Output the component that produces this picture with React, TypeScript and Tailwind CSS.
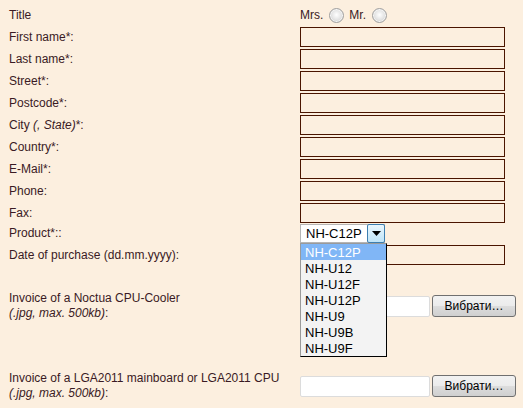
import React from "react";

const labels = [
  "First name*:",
  "Last name*:",
  "Street*:",
  "Postcode*:",
  "CITY",
  "Country*:",
  "E-Mail*:",
  "Phone:",
  "Fax:",
];

const items = ["NH-C12P", "NH-U12", "NH-U12F", "NH-U12P", "NH-U9", "NH-U9B", "NH-U9F"];

function Radio() {
  return (
    <span className="block w-[15px] h-[15px] rounded-full border border-[#a0a0a0] bg-[radial-gradient(circle_at_50%_45%,#ffffff_0%,#e4e4e4_50%,#bfbfbf_100%)] shadow-[inset_0_0_0_1px_#f6f6f6]" />
  );
}

function TextBox() {
  return <div className="w-[205px] h-[20px] border border-[#4a1500] box-border" />;
}

function FileInput() {
  return (
    <div className="flex items-center gap-[2px]">
      <div className="w-[130px] h-[21px] bg-white border border-[#dcdcdc] rounded-[2px]" />
      <div className="w-[84px] h-[22px] rounded-[3px] border border-[#707070] bg-[linear-gradient(#f2f2f2,#ebebeb_50%,#dddddd_50%,#cfcfcf)] flex items-center justify-center text-[12px] text-black">
        Вибрати…
      </div>
    </div>
  );
}

export default function App() {
  return (
    <div
      className="relative w-[523px] h-[408px] bg-[#fcefdf] text-[#3a1a24] text-[12px] leading-[15px] overflow-hidden"
      style={{ fontFamily: '"Liberation Sans", Arial, sans-serif' }}
    >
      <div className="flex flex-col pt-[5px]">
        <div className="flex items-center h-[20px]">
          <div className="w-[300px] pl-[9px]">Title</div>
          <div className="flex items-center">
            <span>Mrs.</span>
            <span className="ml-[6px]"><Radio /></span>
            <span className="ml-[5px]">Mr.</span>
            <span className="ml-[6px]"><Radio /></span>
          </div>
        </div>
        {labels.map((l) => (
          <div key={l} className="flex items-center h-[20px] mt-[2px]">
            <div className="w-[300px] pl-[9px]">
              {l === "CITY" ? (
                <span>
                  City <i>(, State)</i>*:
                </span>
              ) : (
                l
              )}
            </div>
            <TextBox />
          </div>
        ))}
        <div className="flex items-center h-[19px] mt-[1px]">
          <div className="w-[300px] pl-[9px]">Product*::</div>
          <div className="w-[85px] h-[19px] flex bg-white border border-[#b5b5b5] box-border text-[13px]">
            <div className="flex-1 flex items-center pl-[5px] text-black">NH-C12P</div>
            <div className="w-[18px] border border-[#3c7fb1] bg-[linear-gradient(#e9f6fd,#bfe4f8)] flex items-center justify-center -my-[1px] -mr-[1px] h-[19px] rounded-[2px]">
              <svg width="9" height="5" viewBox="0 0 9 5">
                <path d="M0 0 H9 L4.5 5 Z" fill="#000" />
              </svg>
            </div>
          </div>
        </div>
        <div className="flex items-center h-[20px] mt-[2px]">
          <div className="w-[300px] pl-[9px]">Date of purchase (dd.mm.yyyy):</div>
          <TextBox />
        </div>
        <div className="flex items-center h-[30px] mt-[26px]">
          <div className="w-[300px] pl-[9px]">
            <div>Invoice of a Noctua CPU-Cooler</div>
            <div>
              <i>(.jpg, max. 500kb)</i>:
            </div>
          </div>
          <FileInput />
        </div>
        <div className="flex items-center h-[30px] mt-[50px]">
          <div className="w-[300px] pl-[9px]">
            <div>Invoice of a LGA2011 mainboard or LGA2011 CPU</div>
            <div>
              <i>(.jpg, max. 500kb)</i>:
            </div>
          </div>
          <FileInput />
        </div>
      </div>
      <div className="absolute left-[300px] top-[243px] w-[87px] bg-[#f3f3f3] border border-black border-l-[#9a9a9a] border-t-[#9a9a9a] text-[13px]">
        {items.map((it, i) => (
          <div
            key={it}
            className={
              "h-[16px] flex items-center pl-[4px] " +
              (i === 0 ? "bg-[#80b6f6] text-white" : "text-black")
            }
          >
            {it}
          </div>
        ))}
      </div>
    </div>
  );
}
